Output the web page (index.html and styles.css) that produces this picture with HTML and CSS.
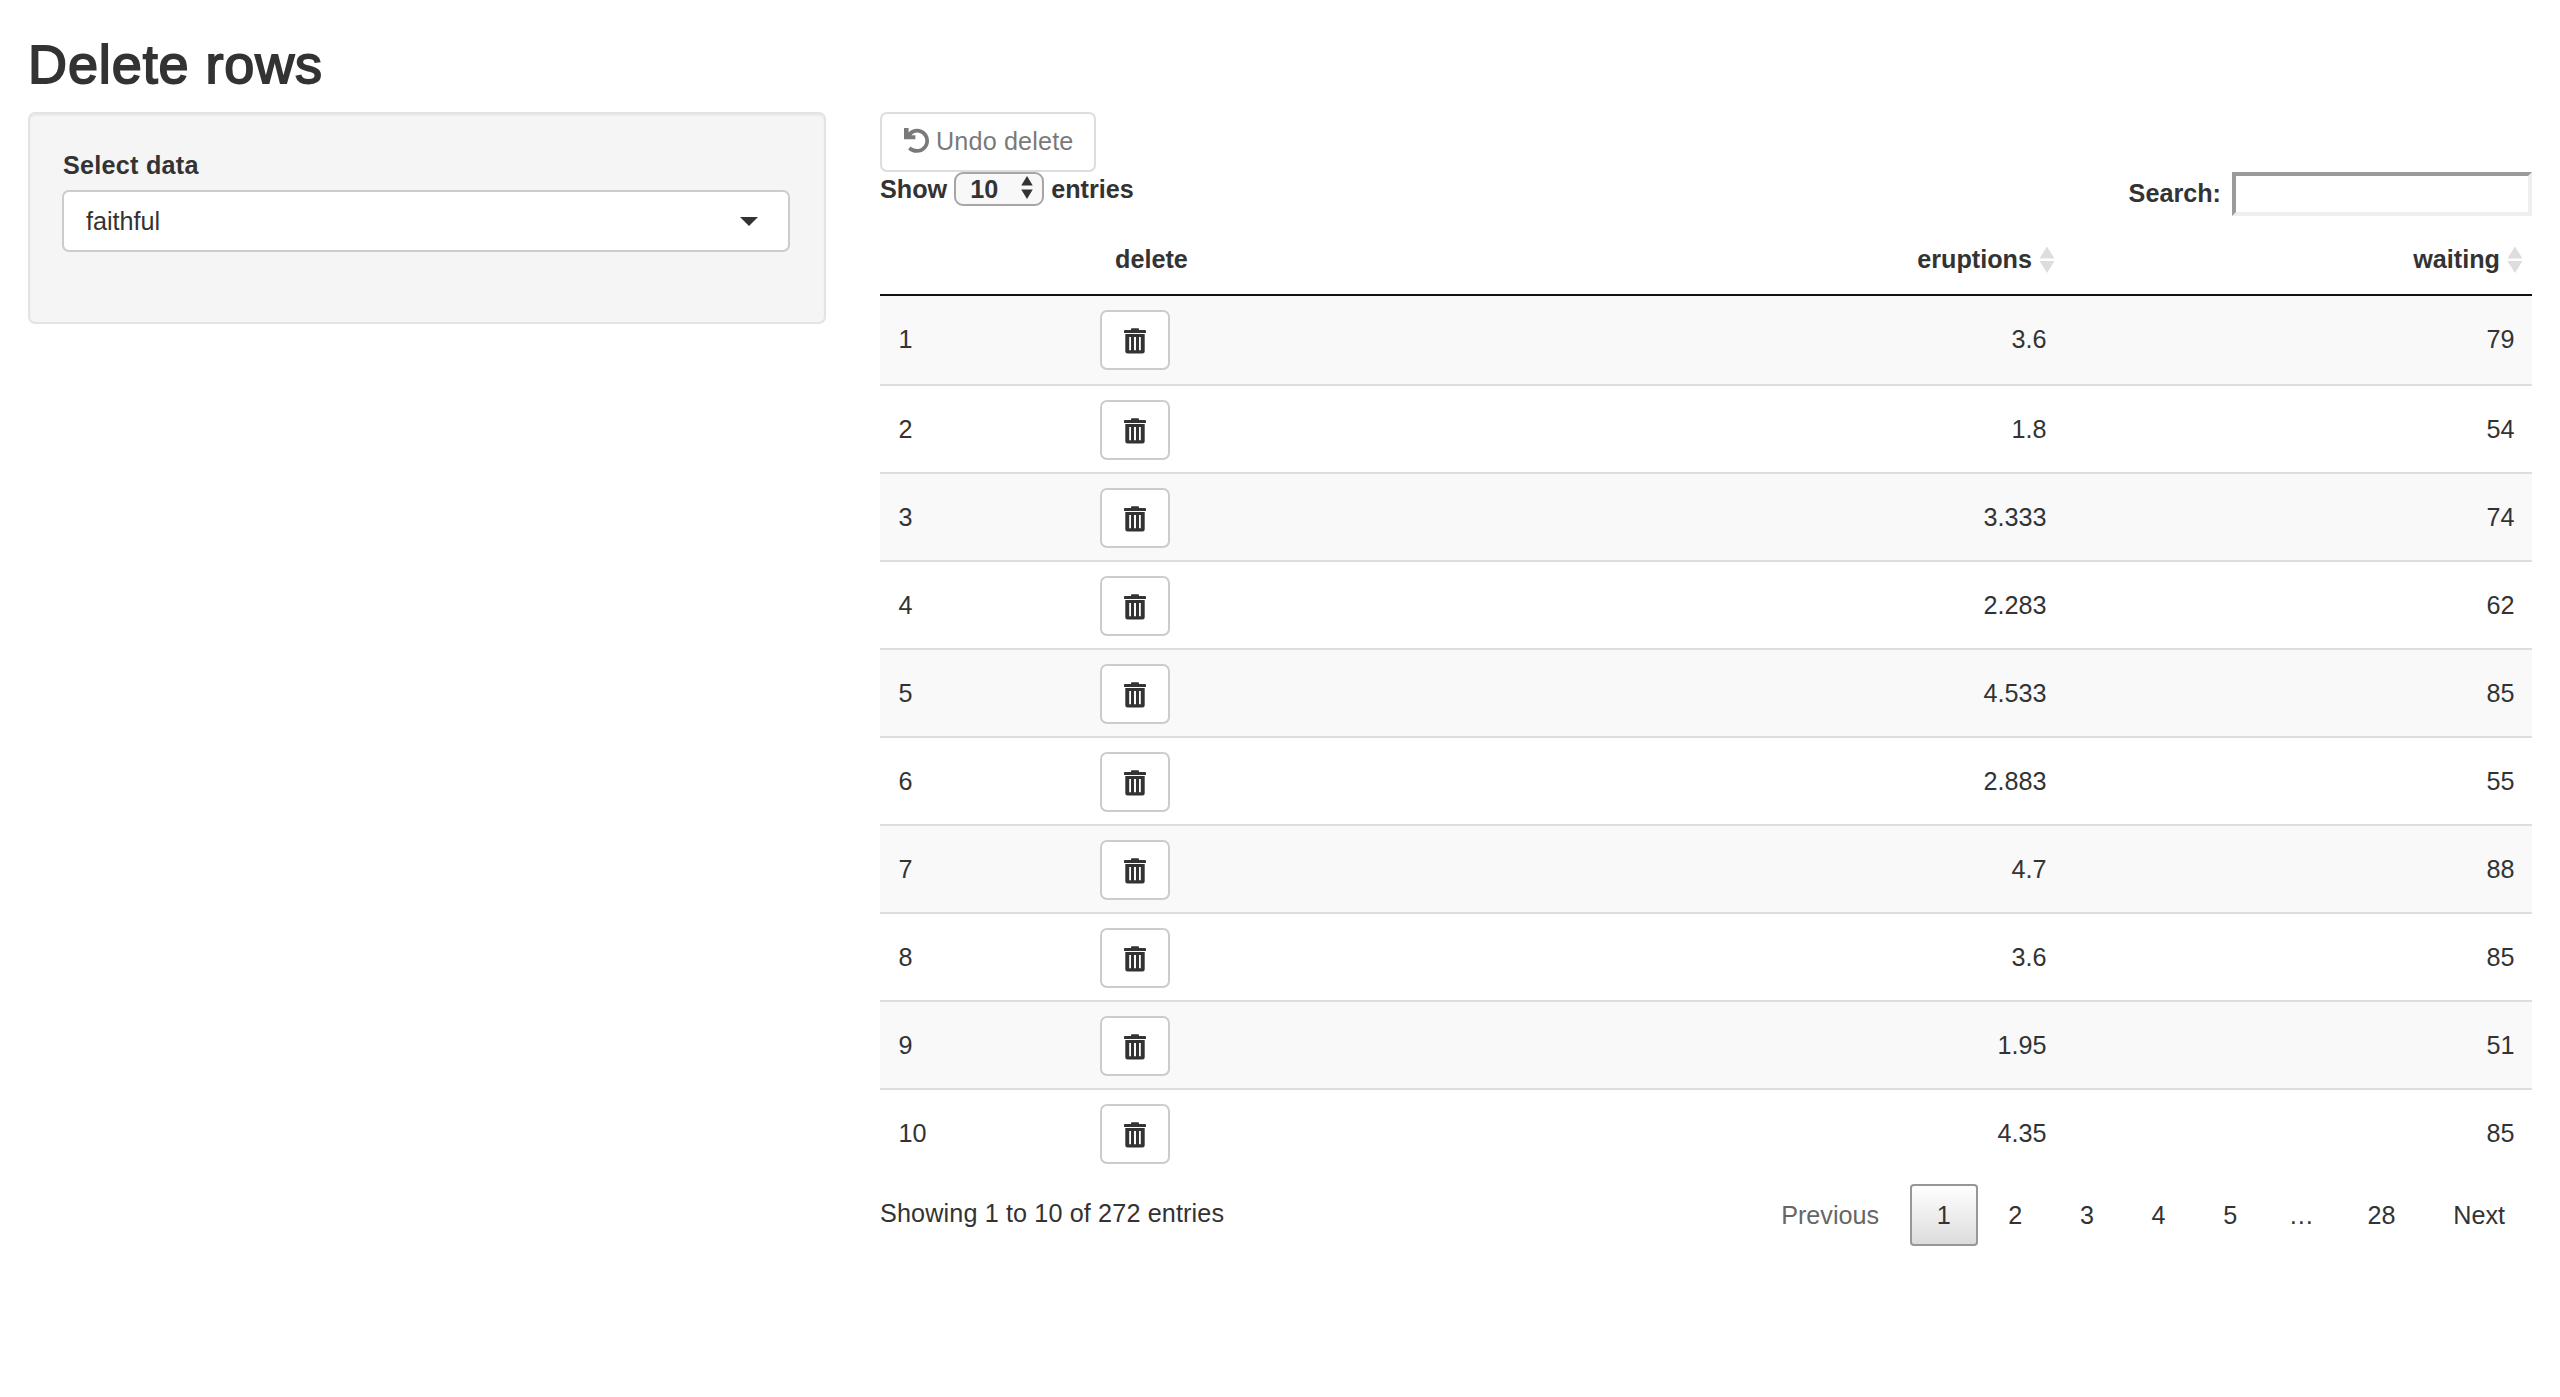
FILE: index.html
```html
<!DOCTYPE html>
<html lang="en">
<head>
<meta charset="utf-8">
<title>Delete rows</title>
<link rel="stylesheet" href="styles.css">
</head>
<body>
<svg class="sprite" width="0" height="0" aria-hidden="true">
  <symbol id="trash" viewBox="0 0 22 26">
    <path d="M7 2 V1.2 Q7 .3 8 .3 H14 Q15 .3 15 1.2 V2 H21 Q22 2 22 3 V5 H0 V3 Q0 2 1 2 Z"/>
    <path fill-rule="evenodd" d="M1.3 6 H20.7 V23 Q20.7 25.5 18.2 25.5 H3.8 Q1.3 25.5 1.3 23 Z M5.2 9 V22.3 H7 V9 Z M10 9 V22.3 H12 V9 Z M15 9 V22.3 H16.8 V9 Z"/>
  </symbol>
  <symbol id="sort" viewBox="0 0 16 28">
    <path d="M8 .5 L15.5 12.5 H.5 Z M.5 15 H15.5 L8 27 Z"/>
  </symbol>
</svg>
<h2 class="title">Delete rows</h2>
<div class="layout">
  <form class="well">
    <label class="field-label">Select data</label>
    <div class="select"><span>faithful</span><i class="caret"></i></div>
  </form>
  <main class="main">
    <button class="btn undo" type="button" disabled>
      <svg class="undo-icon" viewBox="0 0 25 26"><path d="M0 0 H4.6 V4.4 C7 2 9.500 .7 13 .7 C19.700 .7 25 6 25 12.700 C25 19.400 19.700 24.800 13 24.800 C9.500 24.800 6.500 23.600 4.100 21.400 L6.600 18.500 C8.300 20.100 10.400 21 13 21 C17.600 21 21.300 17.300 21.300 12.700 C21.300 8.100 17.600 4.400 13 4.400 C10.800 4.400 9 5.200 7.600 7.200 H11.400 V11.300 H0 Z"/></svg>
      <span>Undo delete</span>
    </button>
    <div class="controls">
      <label class="length">Show
        <span class="stepper">10<svg viewBox="0 0 12 24"><path d="M6 0 L12 10 H0 Z M0 14 H12 L6 24 Z"/></svg></span>
        entries</label>
      <label class="search"><span>Search:</span><input type="text"></label>
    </div>
    <table class="data">
      <colgroup><col class="c-id"><col class="c-delete"><col class="c-eruptions"><col class="c-waiting"></colgroup>
      <thead><tr><th></th><th>delete</th><th class="num">eruptions<svg class="sort"><use href="#sort"/></svg></th><th class="num">waiting<svg class="sort"><use href="#sort"/></svg></th></tr></thead>
      <tbody>
        <tr><td>1</td><td><button class="btn del"><svg><use href="#trash"/></svg></button></td><td class="num">3.6</td><td class="num">79</td></tr>
        <tr><td>2</td><td><button class="btn del"><svg><use href="#trash"/></svg></button></td><td class="num">1.8</td><td class="num">54</td></tr>
        <tr><td>3</td><td><button class="btn del"><svg><use href="#trash"/></svg></button></td><td class="num">3.333</td><td class="num">74</td></tr>
        <tr><td>4</td><td><button class="btn del"><svg><use href="#trash"/></svg></button></td><td class="num">2.283</td><td class="num">62</td></tr>
        <tr><td>5</td><td><button class="btn del"><svg><use href="#trash"/></svg></button></td><td class="num">4.533</td><td class="num">85</td></tr>
        <tr><td>6</td><td><button class="btn del"><svg><use href="#trash"/></svg></button></td><td class="num">2.883</td><td class="num">55</td></tr>
        <tr><td>7</td><td><button class="btn del"><svg><use href="#trash"/></svg></button></td><td class="num">4.7</td><td class="num">88</td></tr>
        <tr><td>8</td><td><button class="btn del"><svg><use href="#trash"/></svg></button></td><td class="num">3.6</td><td class="num">85</td></tr>
        <tr><td>9</td><td><button class="btn del"><svg><use href="#trash"/></svg></button></td><td class="num">1.95</td><td class="num">51</td></tr>
        <tr><td>10</td><td><button class="btn del"><svg><use href="#trash"/></svg></button></td><td class="num">4.35</td><td class="num">85</td></tr>
      </tbody>
    </table>
    <div class="footer">
      <div class="info">Showing 1 to 10 of 272 entries</div>
      <nav class="pages">
        <a class="page disabled">Previous</a><a class="page current">1</a><a class="page">2</a><a class="page">3</a><a class="page">4</a><a class="page">5</a><span class="ellipsis">…</span><a class="page">28</a><a class="page">Next</a>
      </nav>
    </div>
  </main>
</div>
</body>
</html>
```
FILE: styles.css
```css
* { box-sizing: border-box; }
body {
  margin: 0;
  padding: 35px 28px 0;
  background: #fff;
  color: #333;
  font: 25.2px/36px "Liberation Sans", Arial, sans-serif;
}
button, input { font: inherit; color: inherit; }
svg { fill: currentColor; }
.sprite { position: absolute; }
.title {
  margin: 0 0 18px;
  font-size: 54px;
  line-height: 59px;
  font-weight: 400;
  letter-spacing: .9px;
  -webkit-text-stroke: 1.8px #333;
}
.layout { display: flex; align-items: flex-start; gap: 54px; }
.well {
  width: 798px;
  height: 212px;
  padding: 33px 34px 0 32px;
  border: 2px solid #e3e3e3;
  border-radius: 7px;
  background: #f5f5f5;
  box-shadow: inset 0 2px 2px rgba(0, 0, 0, .05);
}
.field-label { display: block; margin: 0 0 7px 1px; font-weight: 700; letter-spacing: .25px; }
.select {
  display: flex;
  align-items: center;
  justify-content: space-between;
  height: 62px;
  padding: 0 30px 0 22px;
  border: 2px solid #ccc;
  border-radius: 7px;
  background: #fff;
}
.caret {
  border: 9px solid transparent;
  border-top-color: #333;
  border-bottom: 0;
}
.main { width: 1652px; }
.btn {
  display: flex;
  align-items: center;
  height: 60px;
  border: 2px solid #ccc;
  border-radius: 7px;
  background: #fff;
}
.undo { width: 216px; padding: 0 0 2px 22px; gap: 7px; opacity: .65; letter-spacing: .15px; }
.undo-icon { width: 25px; height: 26px; }
.controls { display: flex; justify-content: space-between; height: 50px; font-weight: 700; }
.length { display: flex; align-items: center; height: 34px; gap: 7px; }
.stepper {
  display: flex;
  align-items: center;
  justify-content: space-between;
  width: 90px;
  height: 34px;
  padding: 0 9px 0 14px;
  border: 2px solid #a6a6a6;
  border-radius: 9px;
  background: #f8f8f8;
}
.stepper svg { width: 12px; height: 23px; margin-top: -3px; }
.search { display: flex; align-items: center; height: 44px; gap: 11px; }
.search span { padding-bottom: 2px; }
.search input {
  width: 300px;
  height: 44px;
  border: 4px solid;
  border-color: #9a9a9a #eee #eee #9a9a9a;
  background: #fff;
}
.data { width: 1652px; table-layout: fixed; border-spacing: 0; }
.c-id { width: 202px; }
.c-delete { width: 514px; }
.c-eruptions { width: 468px; }
.data th {
  position: relative;
  height: 74px;
  padding: 2px 32px 0 33px;
  border-bottom: 2px solid #111;
  text-align: left;
}
.data td { height: 88px; padding: 0 17.6px 0 18.4px; border-top: 2px solid #ddd; }
.data td:nth-child(2) { padding: 14px 18px 12px; }
.data tr:first-child td { padding-bottom: 2px; border-top: 0; }
.data tr:first-child td:nth-child(2) { padding: 14px 18px; }
.data tbody tr:nth-child(odd) td { background: #f9f9f9; }
.data .num { text-align: right; }
.sort { position: absolute; right: 9px; top: 24px; width: 16px; height: 28px; fill: #ddd; }
.del { justify-content: center; width: 70px; padding: 2px 0 0; }
.del svg { width: 22px; height: 26px; }
.footer { display: flex; justify-content: space-between; padding-top: 8px; }
.info { padding-top: 11px; letter-spacing: .13px; }
.pages { display: flex; }
.page {
  height: 62px;
  margin-left: 3.6px;
  padding: 11px 25px;
  border: 2px solid transparent;
  border-radius: 4px;
  line-height: 36px;
}
.disabled { color: #666; }
.current { border-color: #979797; background: linear-gradient(#fff, #dcdcdc); }
.ellipsis { padding: 13px 23px 13px 24.6px; }
```
